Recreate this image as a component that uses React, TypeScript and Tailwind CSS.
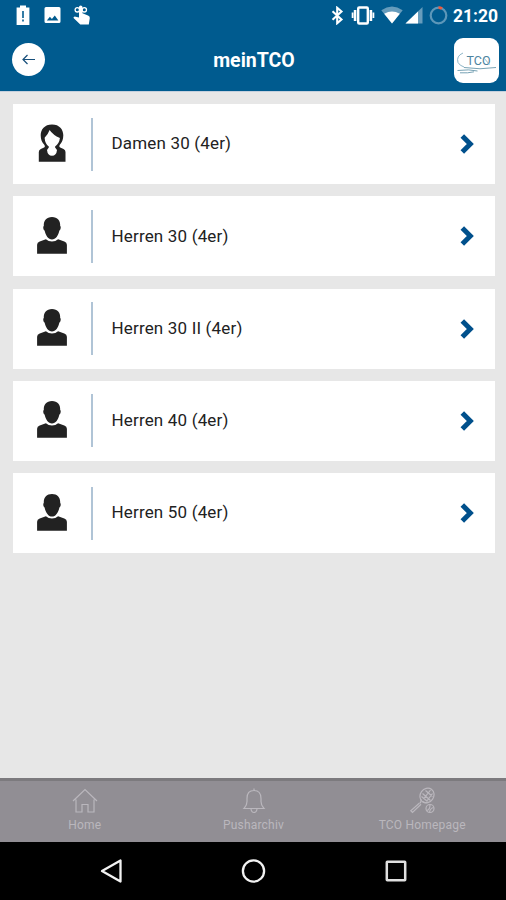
import React from "react";

type Team = {
    name: string,
    female?: boolean
}

type TabProps = {
    label: string,
    children: React.ReactNode
}

const teams: Team[] = [
    { name: "Damen 30 (4er)", female: true },
    { name: "Herren 30 (4er)" },
    { name: "Herren 30 II (4er)" },
    { name: "Herren 40 (4er)" },
    { name: "Herren 50 (4er)" },
];

const StatusBar: React.FC = () => (
    <div className="flex h-8 items-start justify-between pl-4 pr-[9px] text-white">
        <div className="flex pt-[5px]">
            <svg width="14" height="20" viewBox="0 0 14 20" fill="currentColor">
                <path fillRule="evenodd" d="M4 .5h6v2h3.400V20H.6V2.500H4zM6.200 6v7h1.600V6zm0 8.600v2h1.600v-2z" />
            </svg>
            <svg className="ml-[14px]" width="18" height="20" viewBox="0 0 18 20" fill="currentColor">
                <path fillRule="evenodd" d="M2 2h13q1.500 0 1.500 1.500v13q0 1.500-1.500 1.500H2q-1.500 0-1.500-1.500v-13Q.5 2 2 2zm.8 13.400h11.600l-3.600-4.900-2.900 3.600-2-2.300z" />
            </svg>
            <svg className="ml-[11px]" width="18" height="20" viewBox="0 0 18 20">
                <circle cx="4.300" cy="4.800" r="2.200" fill="none" stroke="currentColor" strokeWidth="1.300" />
                <circle cx="11.300" cy="4.800" r="2.200" fill="none" stroke="currentColor" strokeWidth="1.300" />
                <path fill="currentColor" d="M6 2Q6 .4 7.700.4T9.500 2v6.300l5.500 2.200q2 .8 1.800 2.500l-1 6.500H7.300L.3 12.700l1.300-1.300 4.400 1.200z" />
            </svg>
        </div>
        <div className="flex">
            <svg className="mt-[6px]" width="13" height="19" viewBox="0 0 13 19" fill="none" stroke="currentColor" strokeWidth="2.100">
                <path d="M1.500 5.200l9 8.300-4.300 3.700V1.800l4.300 3.700-9 8.300" />
            </svg>
            <svg className="ml-[7px] mt-[6px]" width="24" height="19" viewBox="0 0 24 19" fill="none" stroke="currentColor">
                <rect x="7.200" y="1.500" width="9.600" height="16" rx="1" strokeWidth="2.400" />
                <path strokeWidth="2.600" d="M4.100 4v11M19.900 4v11" />
                <path strokeWidth="1.800" d="M1.600 6.500v5.500M22.400 6.500v5.500" />
            </svg>
            <svg className="ml-[6px] mt-[6px]" width="22" height="19" viewBox="0 0 22 19" fill="currentColor">
                <path opacity=".4" d="M.3 4.200Q11-3 21.700 4.200L11 17.600z" />
                <path d="M3.200 7.800Q11 3 18.800 7.800L11 17.600z" />
            </svg>
            <svg className="ml-[2px] mt-[6px]" width="18" height="19" viewBox="0 0 18 19" fill="currentColor">
                <path opacity=".4" d="M17.500 1v16.500H.5z" />
                <path d="M13 5.400v12.100H.5z" />
            </svg>
            <svg className="ml-[6px] mt-[6px]" width="19" height="19" viewBox="0 0 19 19" fill="none">
                <circle cx="9.500" cy="9.500" r="7.800" stroke="#5d97b9" strokeWidth="2.200" />
                <path d="M9.500 1.700q2.200 0 3.500 1" stroke="#f0593c" strokeWidth="2.800" />
            </svg>
            <span className="ml-[5px] mt-[4px] w-[44px] whitespace-nowrap text-[17.5px] font-bold leading-6">21:20</span>
        </div>
    </div>
);

const Logo: React.FC = () => (
    <div className="h-[45px] w-[45px] rounded-[9px] bg-white">
        <svg width="45" height="45" viewBox="0 0 45 45" fill="none">
            <path d="M9 15Q2 18 4 24.500q1.500 3 6 4.500" stroke="#82aec2" strokeWidth=".9" />
            <path d="M10 29.500Q26 32 42 29.500M3.500 32.500q12-1.500 20 .5M6 34.800q8 .5 14-1" stroke="#6897ab" strokeWidth=".9" />
            <text x="12.500" y="27" fontSize="13" textLength="24" lengthAdjust="spacingAndGlyphs" fill="#4c849f">TCO</text>
            <path d="M29.500 19.500l6 7" stroke="#82aec2" strokeWidth=".8" />
        </svg>
    </div>
);

const PersonIcon: React.FC<{ female?: boolean }> = ({ female }) => (
    <svg className="mb-[3px]" width="32" height="40" viewBox="0 0 32 40" fill="#222">
        {female ? (
            <path fillRule="evenodd" d="M16 1.500c7.500 0 11.300 5 11.300 10.800 0 4.400-1.400 7-3.300 9.200-1 1.200-.8 2.300.2 3l3.300 1.400q2 .8 2 3v9.900H2.800v-9.900q0-2.200 2-3l3.300-1.400c1-.7 1-1.800 0-3-2.100-2.200-3.400-4.800-3.400-9.200C4.700 6.500 8.500 1.500 16 1.500zM13.600 7q-1.500 4.300-5 7.700.4 6 4.200 8.700v1.200L11 27q.6 5.800 5 5.800t5-5.800l-1.900-2.400v-1.200q4.300-3.100 4.800-8.400Q17 12 13.600 7z" />
        ) : (
            <>
                <path d="M16 2c5.500 0 8.500 3.500 8.200 9 1 .7.500 4-.8 4.600-1 5-3.800 9-7.400 9S9.600 20.600 8.600 15.600c-1.300-.6-1.800-3.900-.8-4.600C7.500 5.500 10.500 2 16 2z" />
                <path d="M9.900 24.200q2.500 2.300 6.100 2.300t6.100-2.300l6.200 2.200q2.600.8 2.600 3.400v9H1.100v-9q0-2.600 2.600-3.400z" />
            </>
        )}
    </svg>
);

const TeamRow: React.FC<{ team: Team }> = ({ team }) => (
    <button className="flex h-20 w-full items-center bg-white pl-[23px] pr-5 text-left">
        <PersonIcon female={team.female} />
        <span className="ml-[23px] h-[53px] w-[2px] bg-[#b0c4d6]" />
        <span className="ml-[18.500px] flex-1 whitespace-nowrap text-[17px] tracking-[0.17px] text-[#222]">{team.name}</span>
        <svg width="15" height="20" viewBox="0 0 15 20" fill="none" stroke="#00508c" strokeWidth="5">
            <path d="M2.300 2l8 8-8 8" />
        </svg>
    </button>
);

const Tab: React.FC<TabProps> = ({ label, children }) => (
    <button className="flex flex-1 flex-col items-center pl-px pt-[6px]">
        <svg width="28" height="28" viewBox="0 0 28 28" fill="none" stroke="#bab7bd" strokeWidth="1.200">
            {children}
        </svg>
        <span className="mt-[2px] text-xs leading-4 tracking-[0.2px]">{label}</span>
    </button>
);

const App: React.FC = () => {
    return (
        <div className="flex h-[900px] w-[506px] flex-col overflow-hidden bg-[#e7e7e7] font-['Roboto',sans-serif]">
            <header className="h-[91px] shrink-0 bg-[#005b8f]">
                <StatusBar />
                <div className="flex items-center justify-between pl-3 pr-[7px] pt-[6px] text-white">
                    <div className="w-[42px] pb-[2px]">
                        <button className="flex h-[33px] w-[33px] items-center justify-center rounded-full bg-white">
                            <svg width="13" height="11" viewBox="0 0 13 11" fill="none" stroke="#174f7b" strokeWidth="1.200">
                                <path d="M13 5.500H1.500M5.500 1L1 5.500 5.500 10" />
                            </svg>
                        </button>
                    </div>
                    <h1 className="text-[19.5px] font-bold">meinTCO</h1>
                    <Logo />
                </div>
            </header>

            <main className="flex flex-1 flex-col gap-[12.25px] border-t border-[#c5d0dd] pl-[13px] pr-[11px] pt-3">
                {teams.map((team) => (
                    <TeamRow key={team.name} team={team} />
                ))}
            </main>

            <nav className="flex h-16 shrink-0 border-t-[3px] border-[#7c7a7e] bg-[#918e94] text-[#bab7bd]">
                <Tab label="Home">
                    <path d="M2 14L14 2.500 26 14M5 12.500V25h6v-7.500h6V25h6V12.500" />
                </Tab>
                <Tab label="Pusharchiv">
                    <path d="M14 3.500v-2M4 21.500q3-3 3-7v-3Q7 3.500 14 3.500t7 8v3q0 4 3 7zM11 22q.5 3.500 3 3.500t3-3.500" />
                </Tab>
                <Tab label="TCO Homepage">
                    <ellipse cx="19" cy="8.500" rx="6.700" ry="7.700" transform="rotate(35 19 8.500)" />
                    <path d="M13 12q.5 3-1 4.300M14.500 14.500q2 1.500 4.500 1M11.500 16l-8.700 7.800 1.700 1.700L13 17.300M14.500 6.500l8 7M17.500 3.500l7 6M15.500 12l7-9M18.500 14.500l6-8M13.500 9.500l6 5" />
                    <circle cx="22" cy="21.500" r="4" />
                    <path d="M19 23.500q3-1 3-5.500M21.500 25.500q.5-4 4-5" />
                </Tab>
            </nav>

            <div className="flex h-[58px] shrink-0 items-center justify-between bg-black pl-[100px] pr-[97px]">
                <svg width="24" height="26" viewBox="0 0 24 26" fill="none" stroke="#f2f2f2" strokeWidth="2.300">
                    <path strokeLinejoin="round" d="M2 13L20.500 2.500v21z" />
                </svg>
                <svg width="26" height="26" viewBox="0 0 26 26" fill="none" stroke="#f2f2f2" strokeWidth="2.300">
                    <circle cx="12.500" cy="13" r="10.600" />
                </svg>
                <svg width="26" height="26" viewBox="0 0 26 26" fill="none" stroke="#e0e0e0" strokeWidth="2.500">
                    <rect x="3.800" y="3.800" width="18.400" height="18.400" rx=".5" />
                </svg>
            </div>
        </div>
    );
};

export default App;
